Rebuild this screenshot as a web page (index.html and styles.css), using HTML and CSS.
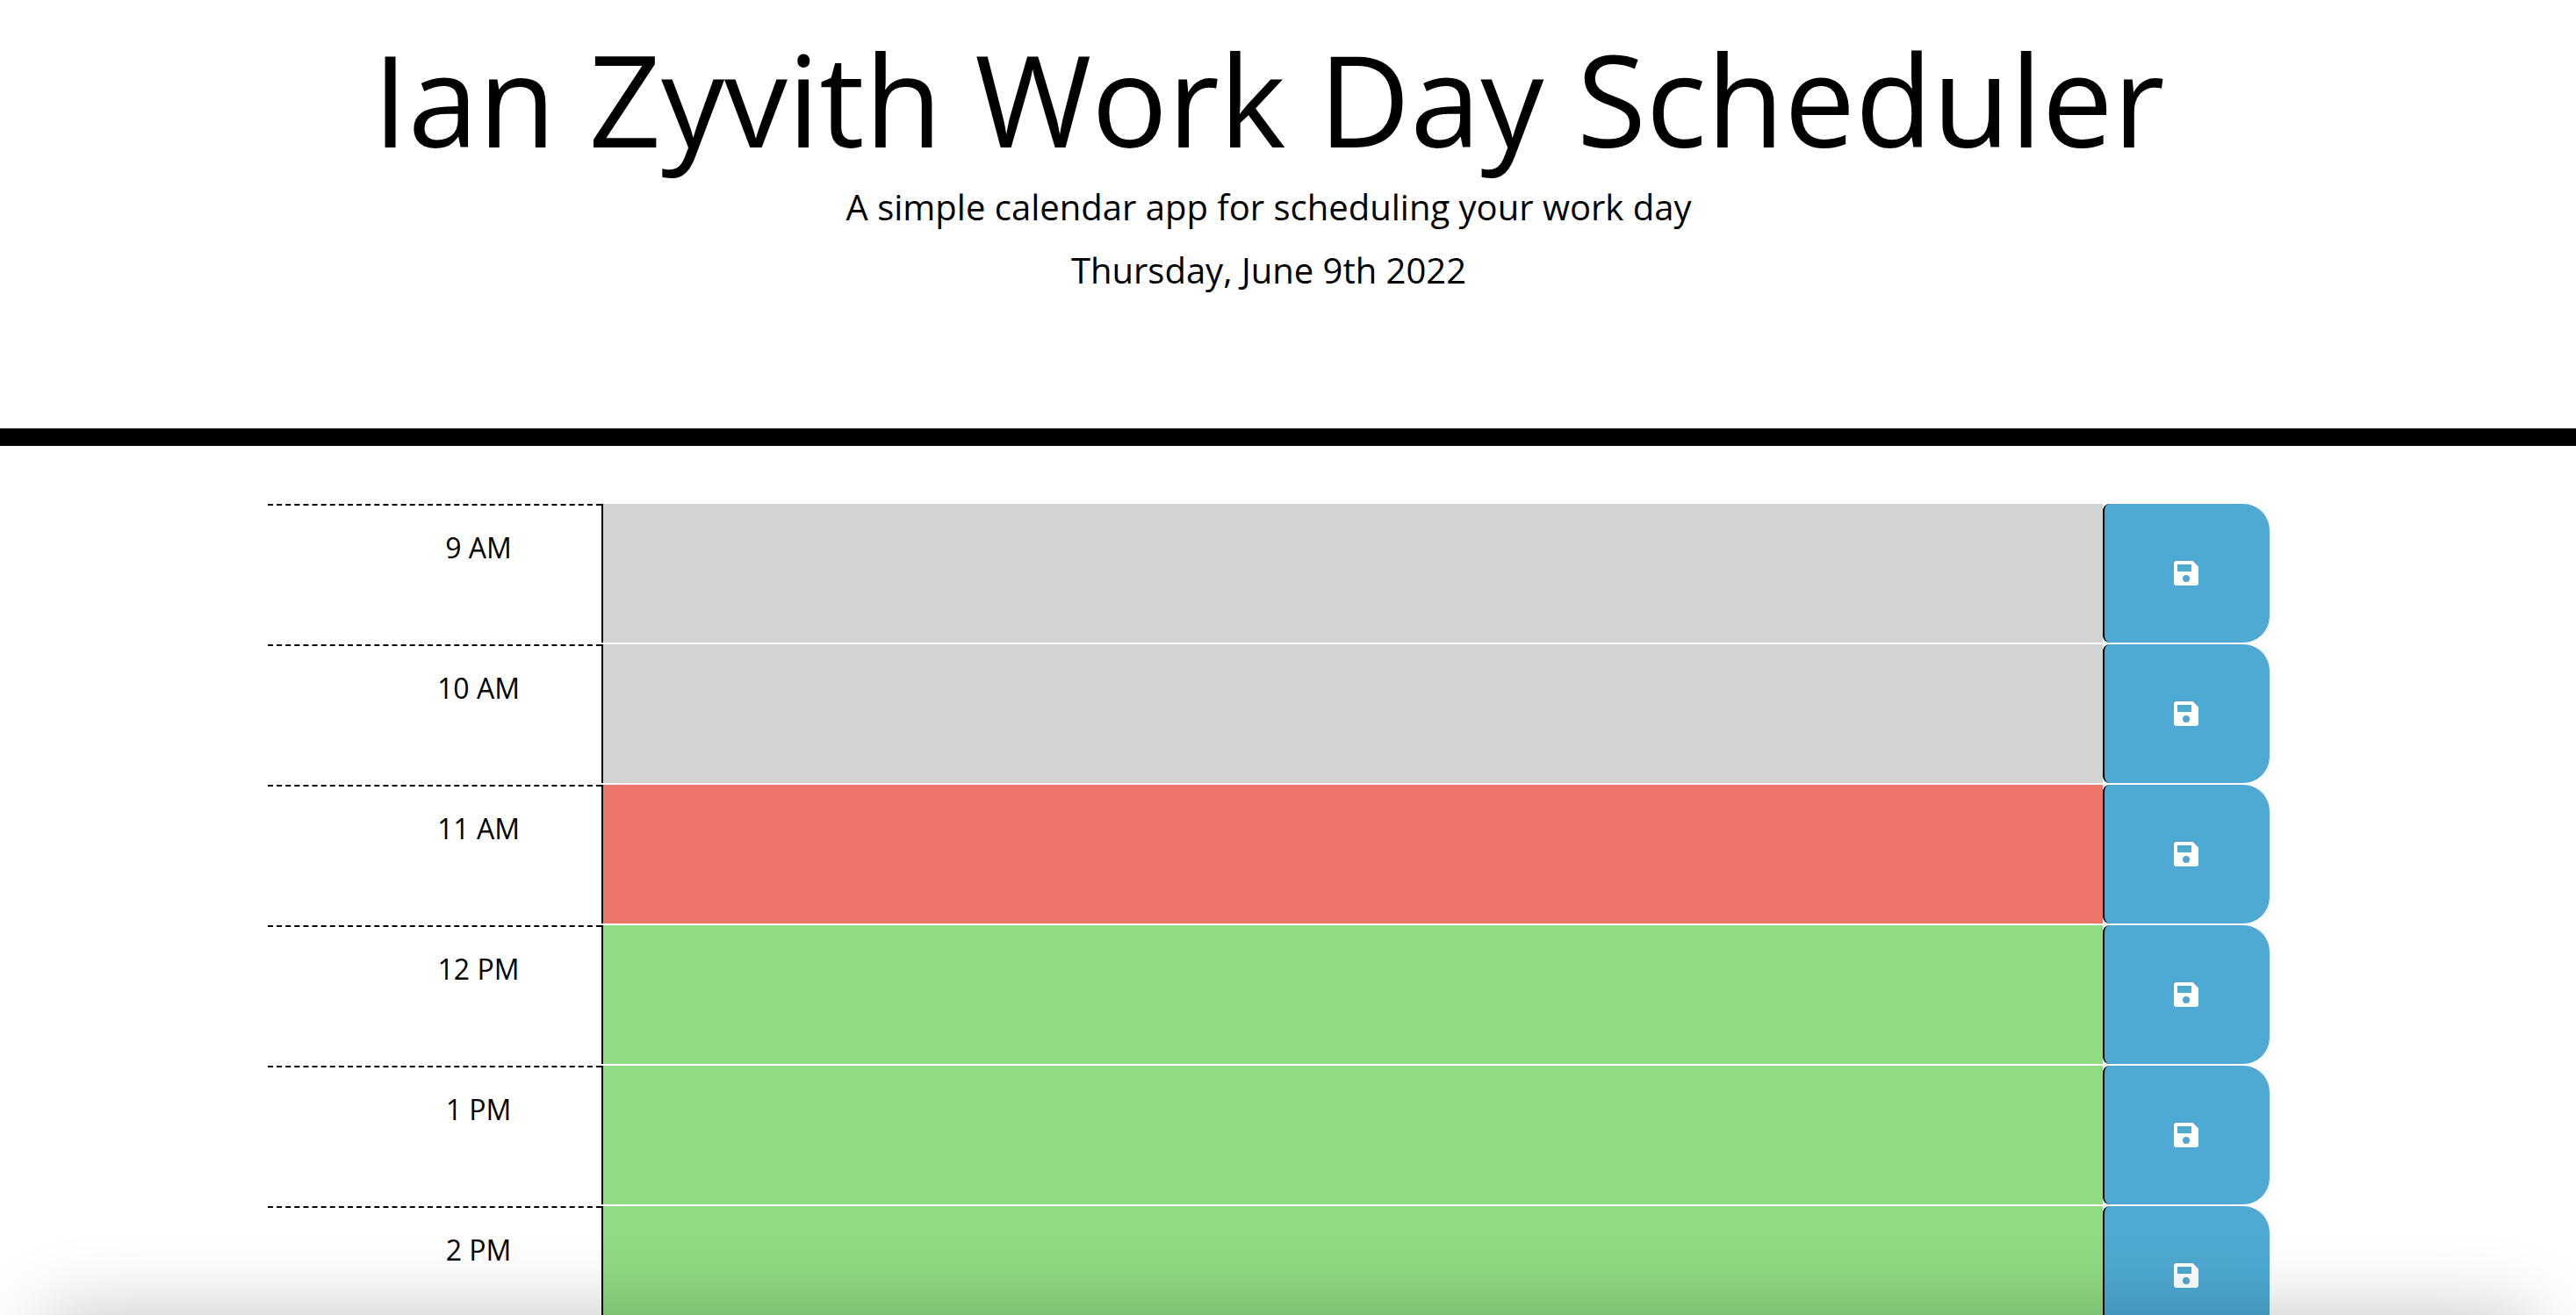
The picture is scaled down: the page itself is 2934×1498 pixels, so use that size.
FILE: index.html
```html
<!DOCTYPE html>
<html lang="en">
<head>
  <meta charset="utf-8">
  <meta name="viewport" content="width=device-width, initial-scale=1">
  <title>Work Day Scheduler</title>
  <link rel="stylesheet" href="styles.css">
</head>
<body>
  <svg class="sprite" aria-hidden="true">
    <symbol id="save" viewBox="0 0 28 28">
      <path fill-rule="evenodd" d="M3 0h18.500L28 6.500V25a3 3 0 0 1-3 3H3a3 3 0 0 1-3-3V3a3 3 0 0 1 3-3ZM4 4v8h16V4ZM14 16a4 4 0 1 0 0 8a4 4 0 1 0 0-8Z"/>
    </symbol>
  </svg>
  <header class="header">
    <h1 class="title">Ian Zyvith Work Day Scheduler</h1>
    <p class="lead">A simple calendar app for scheduling your work day</p>
    <p class="lead">Thursday, June 9th 2022</p>
  </header>
  <main class="schedule">
    <div class="container">
      <div class="time-block">
        <label class="hour" for="hour-9">9 AM</label>
        <textarea class="description past" id="hour-9"></textarea>
        <button class="save-btn" type="button" aria-label="Save 9 AM"><svg class="icon"><use href="#save"/></svg></button>
      </div>
      <div class="time-block">
        <label class="hour" for="hour-10">10 AM</label>
        <textarea class="description past" id="hour-10"></textarea>
        <button class="save-btn" type="button" aria-label="Save 10 AM"><svg class="icon"><use href="#save"/></svg></button>
      </div>
      <div class="time-block">
        <label class="hour" for="hour-11">11 AM</label>
        <textarea class="description present" id="hour-11"></textarea>
        <button class="save-btn" type="button" aria-label="Save 11 AM"><svg class="icon"><use href="#save"/></svg></button>
      </div>
      <div class="time-block">
        <label class="hour" for="hour-12">12 PM</label>
        <textarea class="description future" id="hour-12"></textarea>
        <button class="save-btn" type="button" aria-label="Save 12 PM"><svg class="icon"><use href="#save"/></svg></button>
      </div>
      <div class="time-block">
        <label class="hour" for="hour-13">1 PM</label>
        <textarea class="description future" id="hour-13"></textarea>
        <button class="save-btn" type="button" aria-label="Save 1 PM"><svg class="icon"><use href="#save"/></svg></button>
      </div>
      <div class="time-block">
        <label class="hour" for="hour-14">2 PM</label>
        <textarea class="description future" id="hour-14"></textarea>
        <button class="save-btn" type="button" aria-label="Save 2 PM"><svg class="icon"><use href="#save"/></svg></button>
      </div>
    </div>
  </main>
  <div class="bottom-shade"></div>
</body>
</html>
```

FILE: styles.css
```css
* {
  box-sizing: border-box;
}

html {
  overflow: hidden;
}

body {
  margin: 0;
  background: #fff;
  color: #000;
  font-family: "Open Sans", sans-serif;
  font-size: 32px;
  line-height: 48px;
}

.sprite {
  display: none;
}

.header {
  padding: 26px 44px 138px 0;
  border-bottom: 20px solid #000;
  text-align: center;
}

.title {
  margin: 0 0 8px;
  font-size: 144px;
  font-weight: 400;
  line-height: 172px;
}

.lead {
  margin: 0 0 12px;
  font-size: 40px;
  line-height: 60px;
}

.schedule {
  padding: 66px 44px 0 0;
}

.container {
  display: grid;
  gap: 2px;
  max-width: 2280px;
  margin: 0 auto;
}

.time-block {
  display: grid;
  grid-template-columns: 2fr 9fr 1fr;
  min-height: 158px;
}

.hour {
  padding: 24px 0 0 100px;
  border-top: 2px dashed #000;
  text-align: center;
}

.description {
  min-width: 0;
  height: 100%;
  margin: 0;
  padding: 16px;
  border: 0;
  border-left: 2px solid #000;
  border-radius: 0;
  color: #000;
  font: inherit;
  resize: none;
}

.past {
  background: #d3d3d3;
}

.present {
  background: #ed7469;
}

.future {
  background: #91db83;
}

.save-btn {
  display: flex;
  align-items: center;
  justify-content: center;
  padding: 0 2px 0 0;
  border: 0;
  border-left: 2px solid #000;
  border-radius: 8px 30px 30px 8px;
  background: #4eaad3;
  color: #fff;
}

.icon {
  width: 28px;
  height: 28px;
  fill: currentColor;
}

.bottom-shade {
  position: fixed;
  right: 50px;
  bottom: -200px;
  left: 50px;
  height: 200px;
  box-shadow: 0 0 90px rgba(0, 0, 0, 0.24);
  pointer-events: none;
}
```
